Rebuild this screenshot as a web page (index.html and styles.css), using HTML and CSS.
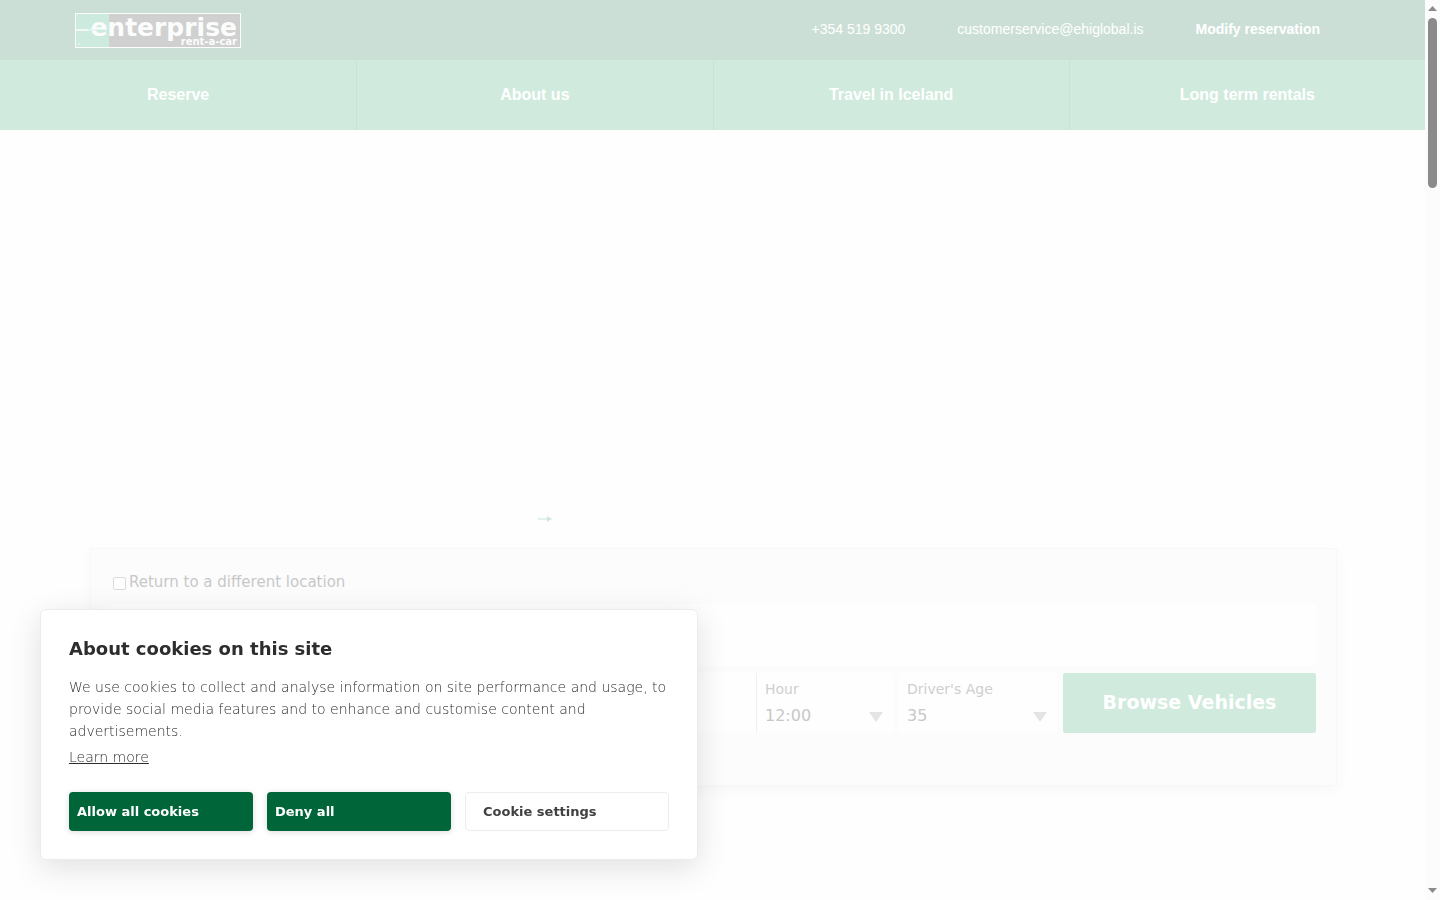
FILE: index.html
```html
<!DOCTYPE html>
<html lang="en">
<head>
    <meta charset="UTF-8">
    <meta name="viewport" content="width=device-width, initial-scale=1.0">
    <title>Enterprise Rent-A-Car Iceland</title>
    <link rel="stylesheet" href="styles.css">
</head>
<body>

<div class="page">
    <header class="topbar">
        <a class="logo" href="#" aria-label="Enterprise rent-a-car">
            <svg width="166" height="35" viewBox="0 0 166 35">
                <rect x="0" y="0" width="166" height="35" fill="#d0d0d0"/>
                <rect x="0" y="0" width="34" height="35" fill="#cdeade"/>
                <rect x="0.5" y="0.5" width="165" height="34" fill="none" stroke="#fbfdfc"/>
                <text class="logo-name" x="162" y="23" text-anchor="end">enterprise</text>
                <path d="M1 17h18" stroke="#fbfdfc" stroke-width="1.5"/>
                <path d="M13 17h17" stroke="#cdeade" stroke-width="0.8"/>
                <text class="logo-sub" x="162" y="32" text-anchor="end">rent-a-car</text>
                <circle cx="4" cy="31" r="1" fill="#e9f6f0"/>
            </svg>
        </a>
        <div class="contact">
            <a href="tel:+3545199300">+354 519 9300</a>
            <a href="mailto:customerservice@ehiglobal.is">customerservice@ehiglobal.is</a>
            <a class="modify" href="#">Modify reservation</a>
        </div>
    </header>

    <nav class="menu">
        <a href="#">Reserve</a>
        <a href="#">About us</a>
        <a href="#">Travel in Iceland</a>
        <a href="#">Long term rentals</a>
    </nav>

    <main>
        <div class="hero">
            <svg width="16" height="8" viewBox="0 0 16 8">
                <path d="M1 4h10" stroke="#d8eee4" stroke-width="1.5"/>
                <path d="M10 1l5 3-5 3z" fill="#cce8dc"/>
            </svg>
        </div>

        <form class="booking">
            <div class="different">
                <input type="checkbox" id="different">
                <label for="different">Return to a different location</label>
            </div>
            <input class="location" type="text" aria-label="Location">
            <div class="fields">
                <input class="dates" type="text" aria-label="Dates">
                <div class="field hour">
                    <label for="hour">Hour</label>
                    <select id="hour">
                        <option>12:00</option>
                    </select>
                </div>
                <div class="field age">
                    <label for="age">Driver's Age</label>
                    <select id="age">
                        <option>35</option>
                    </select>
                </div>
                <button class="browse" type="button">Browse Vehicles</button>
            </div>
        </form>
    </main>
</div>

<div class="scrollbar">
    <svg width="9" height="5" viewBox="0 0 9 5"><path d="M0 5L4.500 0 9 5z" fill="#8b8b8b"/></svg>
    <div class="thumb"></div>
    <svg width="9" height="5" viewBox="0 0 9 5"><path d="M0 0h9L4.500 5z" fill="#8b8b8b"/></svg>
</div>

<section class="cookies">
    <h2>About cookies on this site</h2>
    <p>We use cookies to collect and analyse information on site performance and usage, to provide social media features and to enhance and customise content and advertisements.</p>
    <a href="#">Learn more</a>
    <div class="cookie-buttons">
        <button class="accept" type="button">Allow all cookies</button>
        <button class="accept" type="button">Deny all</button>
        <button class="settings" type="button">Cookie settings</button>
    </div>
</section>

</body>
</html>
```
FILE: styles.css
```css
* {
    box-sizing: border-box;
}

body {
    display: flex;
    margin: 0;
    min-height: 100vh;
    font-family: "DejaVu Sans", sans-serif;
    background-color: #fefefe;
}

.page {
    flex: 1;
}

.topbar {
    display: flex;
    align-items: center;
    justify-content: space-between;
    height: 60px;
    padding: 0 105px 0 75px;
    background-color: #ccdfd6;
}

.logo svg {
    display: block;
}

.logo-name {
    font-size: 25px;
    font-weight: bold;
    fill: #fbfdfc;
}

.logo-sub {
    font-size: 10px;
    font-weight: bold;
    fill: #fbfdfc;
}

.contact {
    display: flex;
    gap: 52px;
    padding-bottom: 2px;
    font-family: "Liberation Sans", Arial, sans-serif;
    font-size: 14px;
}

.contact a, .menu a {
    color: #fff;
    text-decoration: none;
}

.contact .modify {
    font-weight: bold;
}

.menu {
    display: grid;
    grid-template-columns: repeat(4, 1fr);
    height: 70px;
    font-family: "Liberation Sans", Arial, sans-serif;
    font-size: 16px;
    font-weight: bold;
    background-color: #d0eadd;
}

.menu a {
    display: flex;
    align-items: center;
    justify-content: center;
}

.menu a + a {
    border-left: 1px solid #c8e2d6;
}

.hero {
    display: flex;
    align-items: flex-end;
    height: 418px;
    padding: 0 0 25px 537px;
}

.booking {
    margin: 0 88px 0 90px;
    padding: 23px 20px 52px;
    background-color: #fcfcfc;
    border: 1px solid #f8f8f8;
    box-shadow: 0 4px 14px rgba(0, 0, 0, 0.03);
}

.different {
    display: flex;
    align-items: center;
    gap: 3px;
    height: 20px;
    margin-bottom: 12px;
    font-size: 15px;
    color: #c8c8c8;
}

.different input {
    appearance: none;
    width: 13px;
    height: 13px;
    margin: 2px 0 0 2px;
    background-color: #fefefe;
    border: 1px solid #dcdcdc;
    border-radius: 2px;
}

.location, .dates {
    display: block;
    background-color: #fefefe;
    border: none;
}

.location {
    width: 100%;
    height: 62px;
    margin-bottom: 7px;
}

.fields {
    display: flex;
    height: 60px;
}

.dates {
    flex: 1;
    min-width: 0;
}

.field {
    display: flex;
    flex-direction: column;
    padding: 8px 10px 0 8px;
    background-color: #fefefe;
}

.hour {
    width: 137px;
    margin-right: 6px;
    border-left: 1px solid #f0f0f0;
}

.age {
    width: 158px;
    margin-right: 6px;
}

.field label {
    font-size: 14px;
    line-height: 16px;
    color: #cfcfcf;
}

.field select {
    appearance: none;
    height: 24px;
    margin-top: 6px;
    padding: 0;
    font-family: inherit;
    font-size: 16px;
    color: #c8c8c8;
    border: none;
    background: url("data:image/svg+xml,%3Csvg xmlns='http://www.w3.org/2000/svg' width='14' height='10'%3E%3Cpath d='M0 0h14L7 10z' fill='%23e4e4e4'/%3E%3C/svg%3E") right 9px no-repeat;
}

.browse {
    width: 253px;
    padding: 0 6px 2px;
    font-family: inherit;
    font-size: 19px;
    font-weight: bold;
    color: #fff;
    background-color: #d0eadd;
    border: none;
    border-radius: 2px;
    cursor: pointer;
}

.scrollbar {
    display: flex;
    flex-direction: column;
    align-items: center;
    width: 15px;
    padding: 6px 0 7px;
    background-color: #fcfcfc;
}

.thumb {
    width: 9px;
    height: 170px;
    margin: 7px 0 auto;
    background-color: #8b8b8b;
    border-radius: 5px;
}

.cookies {
    position: fixed;
    left: 40px;
    bottom: 40px;
    width: 658px;
    padding: 28px;
    color: #2d2d2d;
    background-color: #fff;
    border: 1px solid #ececec;
    border-radius: 6px;
    box-shadow: 0 8px 32px rgba(0, 0, 0, 0.12);
}

.cookies h2 {
    margin: 0 0 16px;
    font-size: 18px;
    line-height: 22px;
}

.cookies p {
    margin: 0 0 4px;
    font-size: 14px;
    font-weight: 200;
    line-height: 22px;
}

.cookies a {
    display: block;
    font-size: 14px;
    font-weight: 200;
    line-height: 22px;
    color: #2d2d2d;
}

.cookie-buttons {
    display: flex;
    gap: 14px;
    margin-top: 24px;
}

.cookie-buttons button {
    height: 39px;
    font-family: inherit;
    font-size: 13px;
    font-weight: bold;
    text-align: left;
    border-radius: 4px;
    cursor: pointer;
}

.accept {
    width: 184px;
    padding: 0 8px;
    color: #fff;
    background-color: #006639;
    border: none;
    box-shadow: 0 1px 6px rgba(0, 0, 0, 0.14);
}

.settings {
    flex: 1;
    padding: 0 17px;
    color: #404040;
    background-color: #fff;
    border: 1px solid #ececec;
}
```
